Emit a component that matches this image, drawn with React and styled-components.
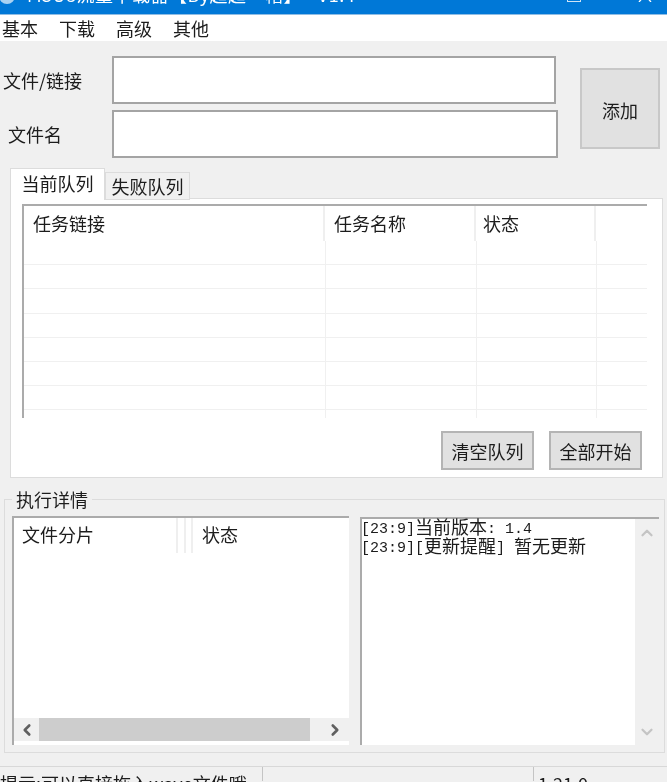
import React from "react";
import styled, { createGlobalStyle } from "styled-components";
import { ChevronLeft, ChevronRight, ChevronUp, ChevronDown } from "lucide-react";

const GlobalStyle = createGlobalStyle`
  html, body {
    margin: 0;
    padding: 0;
    background: #f0f0f0;
  }
  * {
    box-sizing: border-box;
  }
`;

const FONT = `"Noto Sans CJK SC", "Liberation Sans", sans-serif`;
const MONO = `"Liberation Mono", "Noto Sans CJK SC", monospace`;

const App = () => {
  return (
    <Window>
      <GlobalStyle />
      <TitleBar>
        <AppIcon viewBox="0 0 16 16">
          <circle cx="8" cy="8" r="8" fill="#a9d2f2" />
        </AppIcon>
        <TitleText>M3U8流量下载器【By超超一帽】 - V1.4</TitleText>
        <WindowControls>
          <ControlIcon viewBox="0 0 14 14">
            <rect x="0.5" y="0.5" width="13" height="13" fill="none" stroke="#cfe4f6" />
          </ControlIcon>
          <ControlIcon viewBox="0 0 14 14">
            <path d="M1 0 L13 14 M13 0 L1 14" stroke="#fff" strokeWidth="1.3" />
          </ControlIcon>
        </WindowControls>
      </TitleBar>

      <MenuBar>
        <MenuItem>基本</MenuItem>
        <MenuItem>下载</MenuItem>
        <MenuItem>高级</MenuItem>
        <MenuItem>其他</MenuItem>
      </MenuBar>

      <Content>
        <TopForm>
          <Fields>
            <Field>
              <FieldLabel $indent={3}>文件/链接</FieldLabel>
              <TextInput $width={444} />
            </Field>
            <Field>
              <FieldLabel $indent={8}>文件名</FieldLabel>
              <TextInput $width={446} />
            </Field>
          </Fields>
          <AddButton>添加</AddButton>
        </TopForm>

        <TabList>
          <Tab $active>当前队列</Tab>
          <Tab>失败队列</Tab>
        </TabList>
        <TabPanel>
          <QueueTable>
            <QueueHead>
              <HeadCell>任务链接</HeadCell>
              <HeadCell>任务名称</HeadCell>
              <HeadCell $pad={7}>状态</HeadCell>
              <HeadCell />
            </QueueHead>
            {[0, 1, 2, 3, 4, 5, 6, 7].map((row) => (
              <QueueRow key={row}>
                <RowCell />
                <RowCell />
                <RowCell />
                <RowCell />
              </QueueRow>
            ))}
          </QueueTable>
          <PanelActions>
            <ActionButton>清空队列</ActionButton>
            <ActionButton>全部开始</ActionButton>
          </PanelActions>
        </TabPanel>

        <DetailGroup>
          <DetailLegend>执行详情</DetailLegend>
          <DetailInner>
            <PartList>
              <PartHead>
                <PartCell $width={164} $pad={8}>文件分片</PartCell>
                <PartCell $width={8} />
                <PartCell $width={7} />
                <PartCell $pad={9}>状态</PartCell>
              </PartHead>
              <PartBody />
              <HScroll>
                <ScrollArrow $width={25}>
                  <ChevronLeft size={18} strokeWidth={3.5} color="#606060" />
                </ScrollArrow>
                <HThumb />
                <ScrollArrow $width={39} $end>
                  <ChevronRight size={18} strokeWidth={3.5} color="#606060" />
                </ScrollArrow>
              </HScroll>
            </PartList>
            <LogBox>
              <LogText>
                <LogLine>
                  <Ascii>[23:9]</Ascii>当前版本<Ascii>: 1.4</Ascii>
                </LogLine>
                <LogLine>
                  <Ascii>[23:9]</Ascii><Ascii>[</Ascii>更新提醒<Ascii>] </Ascii>暂无更新
                </LogLine>
              </LogText>
              <VScroll>
                <ChevronUp size={18} strokeWidth={3} color="#c4c4c4" />
                <ChevronDown size={18} strokeWidth={3} color="#c4c4c4" />
              </VScroll>
            </LogBox>
          </DetailInner>
        </DetailGroup>
      </Content>

      <StatusBar>
        <StatusCell $width={263}>提示:可以直接拖入wave文件哦</StatusCell>
        <StatusCell $width={271} />
        <StatusCell $pad={4}>1.21.0</StatusCell>
      </StatusBar>
    </Window>
  );
};

const Window = styled.div`
  display: flex;
  flex-direction: column;
  width: 667px;
  height: 782px;
  overflow: hidden;
  background: #f0f0f0;
  color: #1c1c1c;
  font-family: ${FONT};
  font-size: 18px;
  filter: blur(0.35px);
`;

const TitleBar = styled.div`
  flex: none;
  display: flex;
  align-items: flex-end;
  height: 15px;
  padding: 0 0 10px 0;
  background: #0078d7;
  border-bottom: 1px solid #8fbde4;
  color: #fff;
`;

const AppIcon = styled.svg`
  flex: none;
  width: 16px;
  height: 16px;
  margin-left: -1px;
`;

const TitleText = styled.div`
  flex: none;
  margin-left: 12px;
  font-size: 18px;
  line-height: 20px;
  letter-spacing: 0.5px;
  white-space: nowrap;
`;

const WindowControls = styled.div`
  display: flex;
  gap: 57px;
  margin-left: auto;
  margin-right: 15px;
  margin-bottom: 2px;
`;

const ControlIcon = styled.svg`
  flex: none;
  width: 14px;
  height: 14px;
`;

const MenuBar = styled.div`
  flex: none;
  display: flex;
  align-items: center;
  gap: 21px;
  height: 26px;
  padding-left: 2px;
  background: #fff;
`;

const MenuItem = styled.span`
  line-height: 26px;
`;

const Content = styled.div`
  flex: none;
  height: 725px;
`;

const TopForm = styled.div`
  display: flex;
  align-items: flex-start;
  padding-top: 15px;
`;

const Fields = styled.div`
  display: flex;
  flex-direction: column;
  gap: 6px;
`;

const Field = styled.div`
  display: flex;
  align-items: center;
`;

const FieldLabel = styled.label`
  width: 112px;
  padding-left: ${(p) => p.$indent}px;
  white-space: nowrap;
`;

const TextInput = styled.input`
  display: block;
  width: ${(p) => p.$width}px;
  height: 48px;
  padding: 0;
  background: #fff;
  border: 2px solid #a4a4a4;
  outline: none;
`;

const AddButton = styled.button`
  width: 80px;
  height: 81px;
  margin: 12px 0 0 22px;
  padding: 2px 0 0;
  background: #e1e1e1;
  border: 2px solid #c8c8c8;
  color: inherit;
  font: inherit;
`;

const TabList = styled.div`
  display: flex;
  align-items: flex-end;
  height: 32px;
  margin: 10px 0 -2px 10px;
  position: relative;
  z-index: 1;
`;

const Tab = styled.div`
  display: flex;
  align-items: center;
  justify-content: center;
  width: ${(p) => (p.$active ? "95px" : "85px")};
  height: ${(p) => (p.$active ? "32px" : "28px")};
  padding-bottom: ${(p) => (p.$active ? "4px" : "0")};
  background: ${(p) => (p.$active ? "#fff" : "#f0f0f0")};
  border: 1px solid #dcdcdc;
  border-bottom: ${(p) => (p.$active ? "none" : "1px solid #dcdcdc")};
  white-space: nowrap;
`;

const TabPanel = styled.div`
  width: 653px;
  height: 280px;
  margin-left: 10px;
  padding: 5px 0 0 11px;
  background: #fff;
  border: 1px solid #dcdcdc;
`;

const QueueTable = styled.div`
  width: 625px;
  height: 214px;
  overflow: hidden;
  border-top: 2px solid #ababab;
  border-left: 2px solid #ababab;
`;

const QueueHead = styled.div`
  display: grid;
  grid-template-columns: 301px 151px 120px 51px;
  height: 35px;
`;

const HeadCell = styled.div`
  padding-left: ${(p) => p.$pad || 9}px;
  line-height: 34px;
  border-right: 2px solid #efefef;
  &:last-child {
    border-right: none;
  }
`;

const QueueRow = styled.div`
  display: grid;
  grid-template-columns: 302px 151px 120px 50px;
  height: 24.2px;
  border-bottom: 1px solid #f0f0f0;
`;

const RowCell = styled.div`
  border-right: 1px solid #f0f0f0;
  &:last-child {
    border-right: none;
  }
`;

const PanelActions = styled.div`
  display: flex;
  justify-content: flex-end;
  gap: 15px;
  margin-top: 13px;
  padding-right: 20px;
`;

const ActionButton = styled.button`
  width: 93px;
  height: 39px;
  padding: 0;
  background: #e1e1e1;
  border: 2px solid #b4b4b4;
  color: inherit;
  font: inherit;
`;

const DetailGroup = styled.fieldset`
  display: block;
  width: 661px;
  height: 267px;
  margin: 8px 0 0 4px;
  padding: 0 0 0 7px;
  border: 1px solid #dcdcdc;
`;

const DetailLegend = styled.legend`
  margin-left: 0;
  padding: 0 4px 0 4px;
  height: 26px;
  line-height: 26px;
`;

const DetailInner = styled.div`
  display: flex;
  gap: 11px;
  padding-top: 4px;
`;

const PartList = styled.div`
  display: flex;
  flex-direction: column;
  width: 337px;
  height: 229px;
  background: #fff;
  border-top: 2px solid #ababab;
  border-left: 2px solid #ababab;
`;

const PartHead = styled.div`
  flex: none;
  display: flex;
  height: 35px;
`;

const PartCell = styled.div`
  flex: ${(p) => (p.$width ? `0 0 ${p.$width}px` : "1")};
  padding-left: ${(p) => p.$pad || 0}px;
  line-height: 32px;
  white-space: nowrap;
  border-right: 2px solid #efefef;
  &:last-child {
    border-right: none;
  }
`;

const PartBody = styled.div`
  flex: 1;
`;

const HScroll = styled.div`
  flex: none;
  display: flex;
  align-items: stretch;
  height: 23px;
  margin-bottom: 4px;
  background: #f0f0f0;
`;

const ScrollArrow = styled.div`
  flex: 0 0 ${(p) => p.$width}px;
  display: flex;
  align-items: center;
  justify-content: ${(p) => (p.$end ? "flex-end" : "center")};
  padding-right: ${(p) => (p.$end ? "5px" : "0")};
`;

const HThumb = styled.div`
  flex: 1;
  background: #cdcdcd;
`;

const LogBox = styled.div`
  display: flex;
  width: 299px;
  height: 228px;
  margin-top: 1px;
  background: #fff;
  border-top: 2px solid #ababab;
  border-left: 2px solid #ababab;
`;

const LogText = styled.div`
  flex: 1;
  margin-left: -1px;
`;

const LogLine = styled.div`
  height: 19px;
  line-height: 14px;
  white-space: pre;
`;

const Ascii = styled.span`
  position: relative;
  top: -1px;
  font-family: ${MONO};
  font-size: 15px;
`;

const VScroll = styled.div`
  flex: 0 0 24px;
  display: flex;
  flex-direction: column;
  align-items: center;
  justify-content: space-between;
  padding: 5px 0 4px;
  background: #f0f0f0;
`;

const StatusBar = styled.div`
  flex: none;
  display: flex;
  height: 15px;
  border-top: 1px solid #d8d8d8;
`;

const StatusCell = styled.div`
  flex: ${(p) => (p.$width ? `0 0 ${p.$width}px` : "1")};
  padding-left: ${(p) => p.$pad || 0}px;
  line-height: 32px;
  white-space: nowrap;
  border-right: 1px solid #c4c4c4;
  &:last-child {
    border-right: none;
  }
`;

export default App;
